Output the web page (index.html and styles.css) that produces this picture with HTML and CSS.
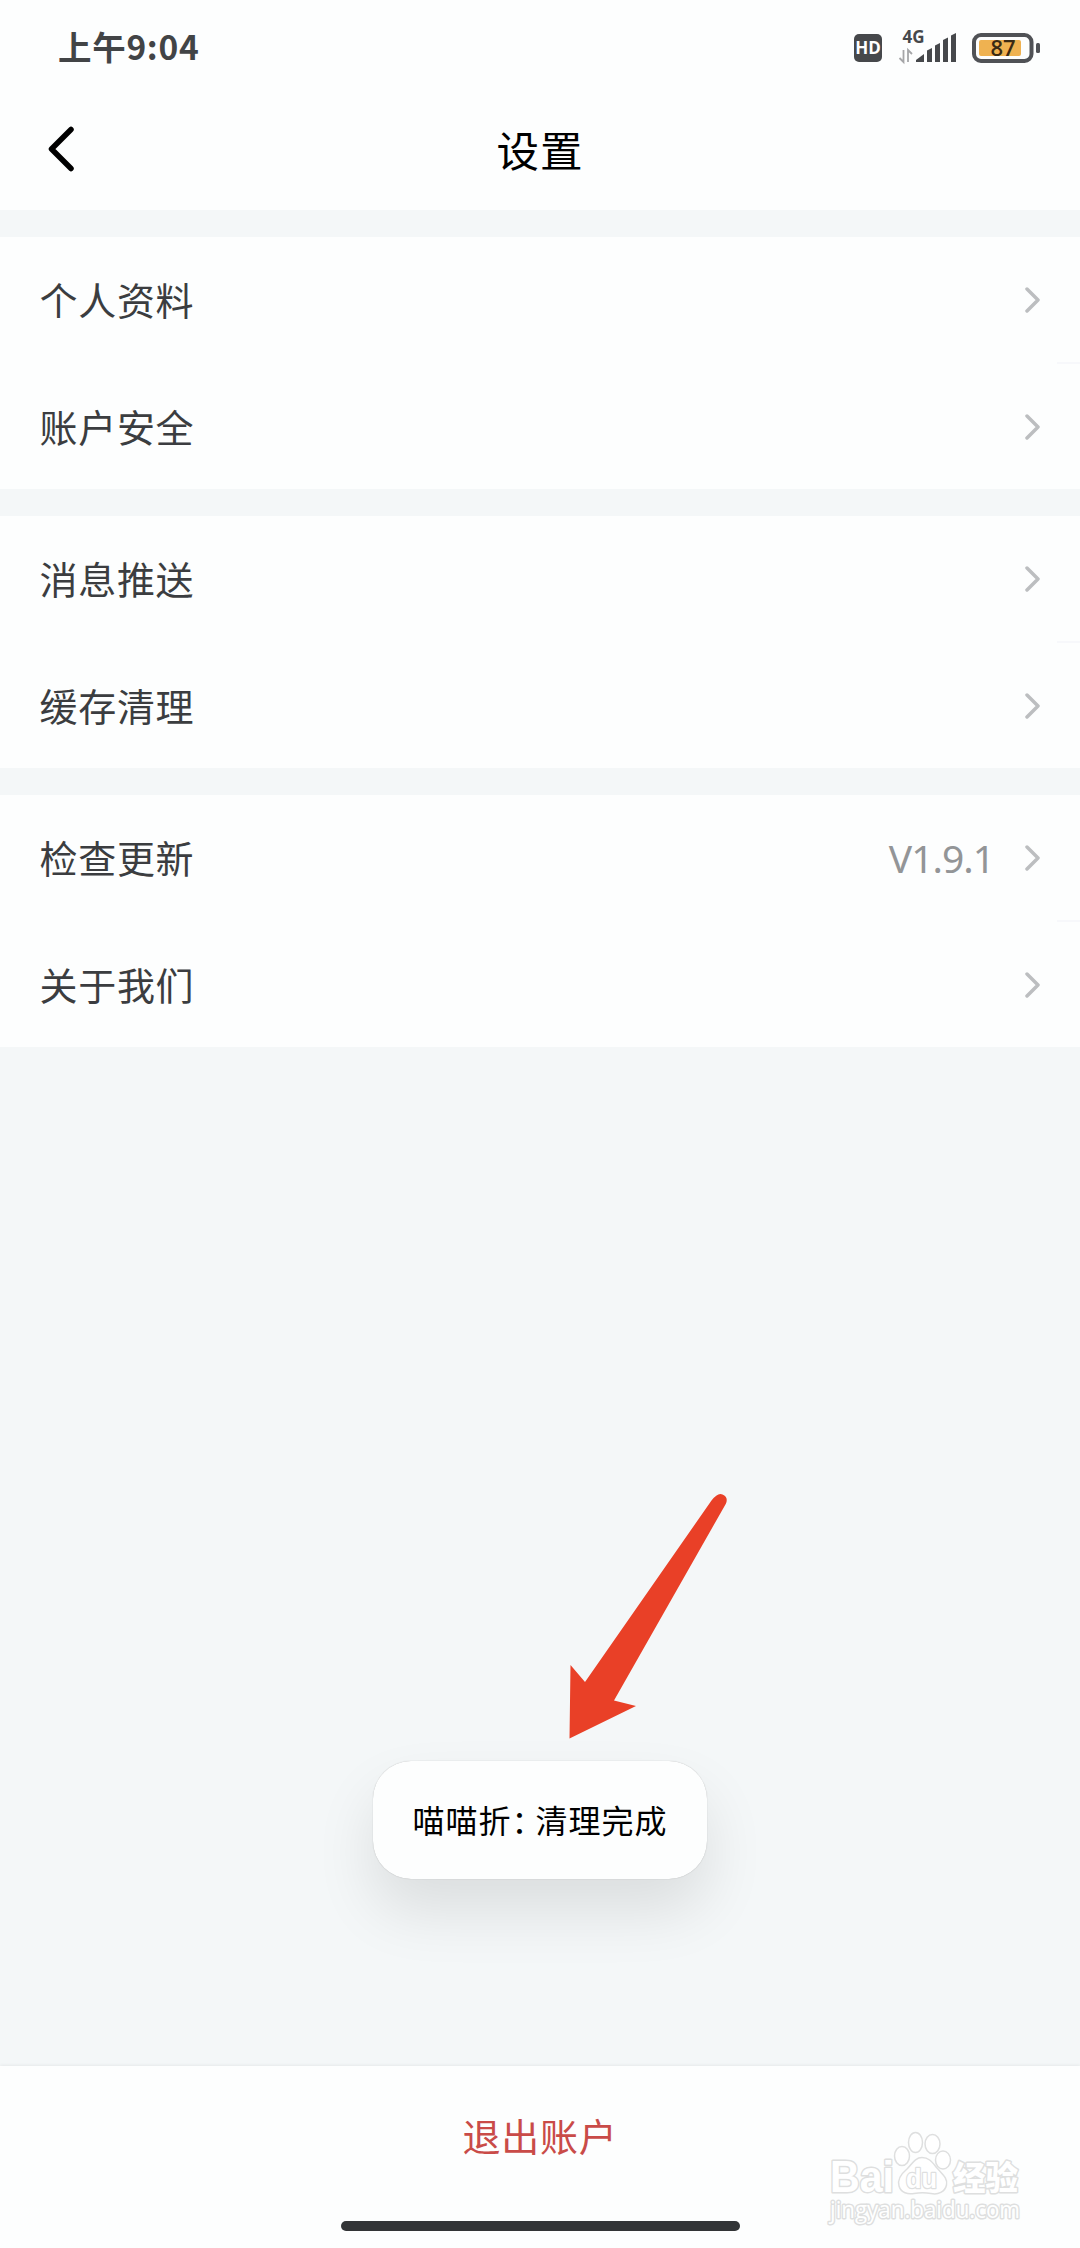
FILE: index.html
```html
<!DOCTYPE html>
<html lang="zh-CN">

<head>
    <meta charset="UTF-8" />
    <meta name="viewport" content="width=device-width, initial-scale=1.0" />
    <title>设置</title>
    <link rel="stylesheet" href="styles.css">
</head>

<body>

    <div class="screen">
        <!-- Status bar -->
        <div class="status-bar">
            <div class="status-time">上午9:04</div>
            <svg class="status-icons" width="190" height="44" viewBox="0 -8 190 44">
                <rect x="3" y="5" width="28" height="28" rx="5" fill="#46484b" />
                <text x="17" y="25" class="hd-text">HD</text>
                <text x="62.500" y="14" class="net-text">4G</text>
                <g fill="none" stroke="#a5a6a8" stroke-width="1.8">
                    <path d="M52.500 21v12l-4-4M57 33V21l4 4" />
                </g>
                <g fill="#46484b">
                    <path d="M65 33v-2l8-6v8z" />
                    <path d="M76 33V21.500l5-2.500v14z" />
                    <path d="M84 33V16.500l5-2.500v19z" />
                    <path d="M92 33V11l5-2.500V33z" />
                    <path d="M100 33V6.500l5-2.500v29z" />
                </g>
                <rect x="123" y="6" width="57.500" height="26" rx="7" fill="none" stroke="#505256" stroke-width="4" />
                <rect x="128" y="11" width="42" height="16" rx="2" fill="#efb251" />
                <rect x="185" y="14" width="4" height="10" rx="1.500" fill="#505256" />
                <text x="152" y="27" class="battery-text">87</text>
            </svg>
        </div>

        <!-- Title bar -->
        <div class="navbar">
            <svg class="back" width="28" height="46" viewBox="0 0 28 46">
                <path d="M23 3.500L3.500 23L23 42.500" />
            </svg>
            <div class="navbar-title">设置</div>
        </div>

        <!-- Settings list -->
        <div class="list">
            <div class="group">
                <div class="row">
                    <span class="label">个人资料</span>
                    <svg class="chevron" viewBox="0 0 16 26"><path d="M2 2l11 11L2 24" /></svg>
                </div>
                <div class="divider"></div>
                <div class="row">
                    <span class="label">账户安全</span>
                    <svg class="chevron" viewBox="0 0 16 26"><path d="M2 2l11 11L2 24" /></svg>
                </div>
            </div>
            <div class="group">
                <div class="row">
                    <span class="label">消息推送</span>
                    <svg class="chevron" viewBox="0 0 16 26"><path d="M2 2l11 11L2 24" /></svg>
                </div>
                <div class="divider"></div>
                <div class="row">
                    <span class="label">缓存清理</span>
                    <svg class="chevron" viewBox="0 0 16 26"><path d="M2 2l11 11L2 24" /></svg>
                </div>
            </div>
            <div class="group">
                <div class="row">
                    <span class="label">检查更新</span>
                    <span class="version">V1.9.1</span>
                    <svg class="chevron" viewBox="0 0 16 26"><path d="M2 2l11 11L2 24" /></svg>
                </div>
                <div class="divider"></div>
                <div class="row">
                    <span class="label">关于我们</span>
                    <svg class="chevron" viewBox="0 0 16 26"><path d="M2 2l11 11L2 24" /></svg>
                </div>
            </div>
        </div>

        <!-- Logout -->
        <div class="footer">
            <div class="logout">退出账户</div>
            <div class="home-bar"></div>
        </div>

        <!-- Toast -->
        <div class="toast">喵喵折<span class="colon">：</span>清理完成</div>

        <svg class="arrow" width="160" height="250" viewBox="0 0 160 250">
            <path d="M1.500 248.500L2.500 175L17 192L143.500 10.500Q150 2 154.500 4.500Q160.500 7 158 13.500L46 210.500L68 216Z" />
        </svg>

        <!-- Watermark -->
        <svg class="watermark" width="200" height="100" viewBox="0 0 200 100">
            <text x="5" y="64" class="wm-brand" textLength="64" lengthAdjust="spacingAndGlyphs">Bai</text>
            <ellipse cx="77" cy="28" rx="7.500" ry="9.500" />
            <ellipse cx="90.500" cy="14.500" rx="7" ry="10" />
            <ellipse cx="107.500" cy="16" rx="7.500" ry="9.500" />
            <ellipse cx="118" cy="32" rx="7.500" ry="9" />
            <path d="M97 29.500C90 29.500 87 36 82 41C76 46 72 51 74 58C76 65 83 66.500 89 65.500C95 64.500 100 64.500 106 65.500C113 67 120 64 121.500 57C123 50 117 46 112 40C107 34 104 29.500 97 29.500Z" />
            <text x="81" y="60" class="wm-du" textLength="31" lengthAdjust="spacingAndGlyphs">du</text>
            <text x="128" y="62" class="wm-cn" textLength="65" lengthAdjust="spacingAndGlyphs">经验</text>
            <text x="5" y="90" class="wm-url" textLength="190" lengthAdjust="spacingAndGlyphs">jingyan.baidu.com</text>
        </svg>
    </div>

</body>

</html>
```
FILE: styles.css
```css
body {
    margin: 0;
    font-family: "Noto Sans CJK SC", sans-serif;
    background: #f4f7f8;
    color: #3b3d40;
}

.screen {
    position: relative;
    display: flex;
    flex-direction: column;
    width: 1080px;
    height: 2248px;
    overflow: hidden;
}

.status-bar {
    display: flex;
    justify-content: space-between;
    align-items: center;
    height: 96px;
    padding: 0 39px 0 58px;
    background: #fdfefe;
}

.status-time {
    margin-top: -5px;
    font-size: 33.5px;
    font-weight: 700;
    letter-spacing: 0.7px;
    color: #424446;
}

.status-icons {
    margin-top: -11px;
    font-family: "Open Sans", sans-serif;
    text-anchor: middle;
}

.hd-text {
    font-size: 17px;
    font-weight: 700;
    fill: #fff;
}

.net-text {
    font-size: 17px;
    font-weight: 700;
    fill: #46484b;
}

.battery-text {
    font-size: 22px;
    font-weight: 600;
    fill: #3a2a14;
}

.navbar {
    display: flex;
    align-items: center;
    height: 114px;
    padding: 0 48px;
    background: #fdfefe;
}

.back {
    margin-top: -8px;
    fill: none;
    stroke: #000;
    stroke-width: 5.5;
    stroke-linecap: round;
    stroke-linejoin: round;
}

.navbar-title {
    flex: 1;
    margin-top: -9px;
    margin-right: 28px;
    text-align: center;
    font-size: 42.5px;
    letter-spacing: 1px;
    line-height: 60px;
    color: #000;
}

.list {
    flex: 1;
    display: flex;
    flex-direction: column;
    gap: 27px;
    padding-top: 27px;
}

.group {
    background: #fdfefe;
}

.row {
    display: flex;
    align-items: center;
    height: 125px;
    padding: 0 39px 0 39.5px;
}

.label {
    flex: 1;
    margin-top: -3px;
    font-size: 38px;
    letter-spacing: 0.7px;
}

.version {
    margin-right: 31px;
    font-family: "Noto Sans", sans-serif;
    font-size: 39px;
    letter-spacing: -1px;
    color: #939597;
}

.chevron {
    width: 16px;
    height: 26px;
    fill: none;
    stroke: #bcbec0;
    stroke-width: 3.5;
    stroke-linecap: round;
    stroke-linejoin: round;
}

.divider {
    height: 2px;
    margin-left: 1057px;
    background: #f7f8fb;
}

.footer {
    display: flex;
    flex-direction: column;
    align-items: center;
    justify-content: space-between;
    height: 182px;
    box-sizing: border-box;
    padding: 41px 0 17px;
    background: #fdfefe;
    box-shadow: 0 -1px 3px rgba(0, 0, 0, 0.06);
}

.logout {
    font-size: 38px;
    line-height: 56px;
    letter-spacing: 0.8px;
    color: #c94b48;
}

.home-bar {
    width: 399px;
    height: 10px;
    border-radius: 5px;
    background: #323436;
}

.toast {
    position: absolute;
    left: 373px;
    top: 1761px;
    width: 334px;
    height: 118px;
    border-radius: 38px;
    background: #fdfefe;
    box-shadow: 0 0 1px rgba(0, 0, 0, 0.3), 0 32px 60px rgba(0, 0, 0, 0.1);
    text-align: center;
    font-size: 32px;
    line-height: 116px;
    letter-spacing: 1px;
    white-space: nowrap;
    color: #000;
}

.colon {
    letter-spacing: -8px;
}

.arrow {
    position: absolute;
    left: 568px;
    top: 1490px;
    fill: #e94027;
}

.watermark {
    position: absolute;
    left: 825px;
    top: 2128px;
    fill: #fff;
    stroke: #dedfdf;
    stroke-width: 1.5;
}

.watermark text {
    paint-order: stroke;
    stroke-width: 3;
    stroke-linejoin: round;
}

.wm-brand {
    font-family: "Liberation Sans", sans-serif;
    font-size: 44px;
    font-weight: 700;
}

.watermark .wm-du {
    font-family: "Liberation Sans", sans-serif;
    font-size: 27px;
    font-weight: 700;
    stroke-width: 2.5;
}

.wm-cn {
    font-size: 33px;
    font-weight: 900;
}

.wm-url {
    font-family: "Open Sans", sans-serif;
    font-size: 23px;
}
```
